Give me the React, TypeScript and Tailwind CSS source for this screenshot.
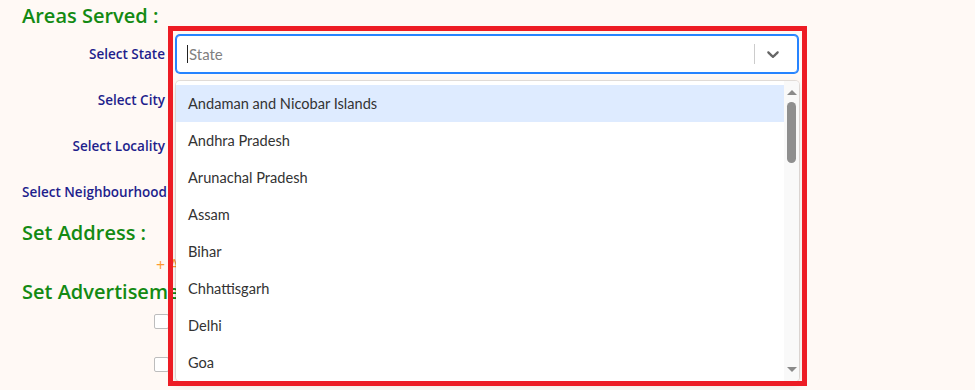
import React from "react";

const states = [
  "Andaman and Nicobar Islands",
  "Andhra Pradesh",
  "Arunachal Pradesh",
  "Assam",
  "Bihar",
  "Chhattisgarh",
  "Delhi",
  "Goa",
  "Gujarat",
];

const labels = ["Select State", "Select City", "Select Locality", "Select Neighbourhood"];

const Chevron = () => (
  <svg viewBox="0 0 20 20" width="20" height="20" fill="#666666">
    <path d="M4.516 7.548c0.436-0.446 1.043-0.481 1.576 0l3.908 3.747 3.908-3.747c0.533-0.481 1.141-0.446 1.574 0 0.436 0.445 0.408 1.197 0 1.615-0.406 0.418-4.695 4.502-4.695 4.502-0.217 0.223-0.502 0.335-0.787 0.335s-0.57-0.112-0.789-0.335c0 0-4.287-4.084-4.695-4.502s-0.436-1.17 0-1.615z" />
  </svg>
);

// react-select style dropdown, opened, with the red highlight frame around it
const StateSelect: React.FC = () => (
  <div className="relative w-[622px] z-10" style={{ fontFamily: "Lato, 'Open Sans', sans-serif" }}>
    <div className="h-[38px] flex items-center bg-white border border-[#2684FF] rounded-[4px] shadow-[0_0_0_1px_#2684FF] pr-[6px]">
      <div className="flex-1 flex items-center pl-[10px]">
        <span className="w-px h-[18px] bg-[#222]" />
        <span className="text-[15px] text-[#808080] ml-px">State</span>
      </div>
      <span className="w-px h-[20px] bg-[#cccccc]" />
      <div className="w-[36px] flex justify-center">
        <Chevron />
      </div>
    </div>

    <div className="absolute left-0 top-full mt-2 w-[623px] h-[300px] bg-white rounded-[4px] shadow-[0_0_0_1px_rgba(0,0,0,0.1),0_4px_11px_rgba(0,0,0,0.1)] flex overflow-hidden">
      <div className="flex-1 pt-1 overflow-hidden">
        {states.map((s, i) => (
          <div
            key={s}
            className={`h-[37px] px-3 flex items-center text-[14.6px] text-[#333333] ${
              i === 0 ? "bg-[#DEEBFF]" : ""
            }`}
          >
            {s}
          </div>
        ))}
      </div>
      <div className="w-[15px] bg-[#f9f9f9] flex flex-col items-center pt-[9px] pb-[9px]">
        <div className="w-0 h-0 border-l-[5px] border-r-[5px] border-b-[5px] border-l-transparent border-r-transparent border-b-[#8a8a8a]" />
        <div className="mt-[7px] w-[9px] h-[61px] rounded-full bg-[#8f8f8f]" />
        <div className="flex-1" />
        <div className="w-0 h-0 border-l-[5px] border-r-[5px] border-t-[5px] border-l-transparent border-r-transparent border-t-[#8a8a8a]" />
      </div>
    </div>

    <div className="absolute -left-[8px] -top-[9px] w-[639px] h-[360px] border-[5px] border-[#ED1C24] pointer-events-none" />
  </div>
);

export default function App() {
  return (
    <div
      className="relative w-full h-[390px] overflow-hidden bg-[#FFF9F5] px-[22px]"
      style={{ fontFamily: '"Open Sans", "Noto Sans", sans-serif' }}
    >
      <div className="h-[31px] flex items-center text-[20px] font-semibold text-[#138A13]">
        Areas Served :
      </div>

      {labels.map((l, i) => (
        <div key={l} className="h-[46px] flex items-center">
          <div className="w-[143px] text-right text-[13.5px] font-semibold text-[#1E1E8C] whitespace-nowrap">
            {l}
          </div>
          {i === 0 && (
            <div className="ml-[11px]">
              <StateSelect />
            </div>
          )}
        </div>
      ))}

      <div className="h-[36px] flex items-center text-[20px] font-semibold text-[#138A13]">
        Set Address :
      </div>
      <div className="h-[28px] flex items-center pl-[134px] text-[16px] text-[#FF9933]">
        + Add Address
      </div>
      <div className="h-[26px] flex items-center text-[20px] font-semibold text-[#138A13] whitespace-nowrap">
        Set Advertisement :
      </div>
      <div className="pt-[9px] pl-[132px] flex flex-col gap-[28px]">
        <div className="w-[15px] h-[15px] bg-white border border-[#bdbdbd] rounded-[2px]" />
        <div className="w-[15px] h-[15px] bg-white border border-[#bdbdbd] rounded-[2px]" />
      </div>
    </div>
  );
}
